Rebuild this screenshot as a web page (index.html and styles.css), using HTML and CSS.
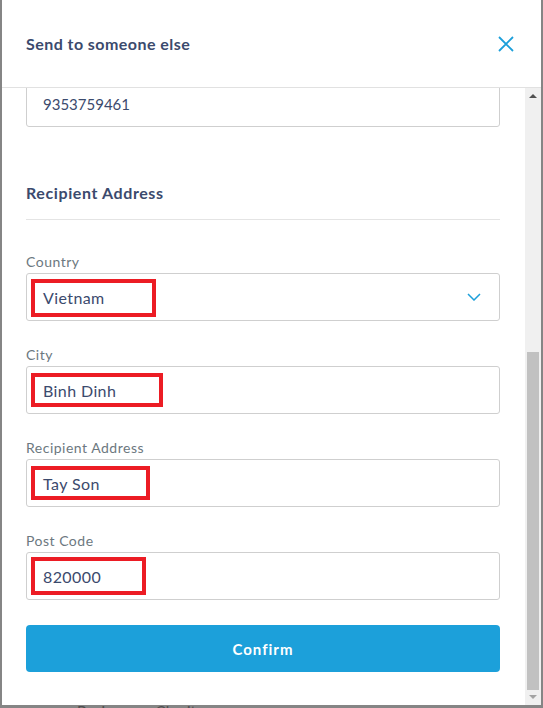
FILE: index.html
```html
<!DOCTYPE html>
<html lang="en">
<head>
<meta charset="utf-8">
<title>Send to someone else</title>
<link rel="stylesheet" href="styles.css">
</head>
<body>
<div class="backdrop">
  <div class="modal">
    <header class="modal-header">
      <h2 class="modal-title">Send to someone else</h2>
      <button class="close" aria-label="Close">
        <svg width="16" height="16" viewBox="0 0 16 16"><path d="M1 1 L15 15 M15 1 L1 15" stroke="#1c9fda" stroke-width="1.8" fill="none"/></svg>
      </button>
    </header>
    <div class="modal-body">
      <div class="scroll-view">
        <div class="content">
          <div class="field-box phone">9353759461</div>

          <h3 class="section-title">Recipient Address</h3>

          <div class="field">
            <label class="field-label">Country</label>
            <div class="field-box select">
              <span class="value">Vietnam</span>
              <svg class="chevron" width="14" height="8" viewBox="0 0 14 8"><path d="M1 1 L7 7 L13 1" stroke="#1c9fda" stroke-width="1.5" fill="none"/></svg>
              <span class="mark mark-country"></span>
            </div>
          </div>

          <div class="field">
            <label class="field-label">City</label>
            <div class="field-box">
              <span class="value">Binh Dinh</span>
              <span class="mark mark-city"></span>
            </div>
          </div>

          <div class="field">
            <label class="field-label">Recipient Address</label>
            <div class="field-box">
              <span class="value">Tay Son</span>
              <span class="mark mark-address"></span>
            </div>
          </div>

          <div class="field">
            <label class="field-label">Post Code</label>
            <div class="field-box">
              <span class="value">820000</span>
              <span class="mark mark-post"></span>
            </div>
          </div>

          <button class="confirm">Confirm</button>
        </div>
      </div>
      <div class="scrollbar">
        <span class="arrow up"></span>
        <div class="track"><div class="thumb"></div></div>
        <span class="arrow down"></span>
      </div>
    </div>
  </div>
  <div class="page-peek"><span class="peek-icon">□</span><span class="peek-text">Business or Charity</span></div>
</div>
</body>
</html>
```

FILE: styles.css
```css
* { box-sizing: border-box; }

html, body {
  margin: 0;
  padding: 0;
  height: 708px;
  overflow: hidden;
}

body {
  background: #858585;
  font-family: "Lato", "Open Sans", sans-serif;
  color: #3b4a6d;
}

.backdrop {
  padding-left: 2px;
  height: 708px;
}

.modal {
  width: 539px;
  height: 705px;
  background: #fff;
  display: flex;
  flex-direction: column;
}

.modal-header {
  height: 88px;
  flex: none;
  border-bottom: 1px solid #e1e1e1;
  display: flex;
  align-items: center;
  justify-content: space-between;
  padding: 0 27px 0 24px;
}

.modal-title {
  margin: 0;
  font-size: 16px;
  font-weight: 700;
  letter-spacing: 0.45px;
  color: #3b4a6d;
  padding-bottom: 1px;
}

.close {
  border: 0;
  background: none;
  padding: 0;
  width: 16px;
  height: 16px;
  display: flex;
  margin-top: 1px;
}

.modal-body {
  flex: 1;
  display: flex;
  min-height: 0;
}

.scroll-view {
  flex: 1;
  overflow: hidden;
}

.content {
  margin-top: -8px;
  padding: 0 25px 0 24px;
}

.field-box {
  position: relative;
  height: 48px;
  border: 1px solid #cfcfcf;
  border-radius: 3px;
  display: flex;
  align-items: center;
  padding: 0 16px;
  font-size: 16px;
  letter-spacing: 0.4px;
  color: #3b4a6d;
}

.field-box.phone {
  height: 47px;
  padding-top: 1px;
  font-size: 15px;
  letter-spacing: 0;
}

.section-title {
  margin: 56px 0 0;
  font-size: 16px;
  line-height: 20px;
  font-weight: 700;
  letter-spacing: 0.6px;
  padding-bottom: 16px;
  border-bottom: 1px solid #e4e4e4;
}

.field {
  display: flex;
  flex-direction: column;
  gap: 2px;
  margin-top: 25px;
}

.section-title + .field { margin-top: 33px; }

.field-label {
  font-size: 14px;
  line-height: 18px;
  color: #6c7880;
  letter-spacing: 0.5px;
}

.select { justify-content: space-between; padding-right: 18px; }

.chevron { display: block; }

.mark {
  position: absolute;
  left: 4px;
  border: 4px solid #ec1c24;
}

.mark-country { top: 5px; width: 125px; height: 38px; }
.mark-city { top: 6px; width: 132px; height: 34px; }
.mark-address { top: 6px; width: 119px; height: 34px; }
.mark-post { top: 4px; width: 115px; height: 38px; }

.confirm {
  display: block;
  width: 100%;
  height: 47px;
  margin-top: 25px;
  border: 0;
  border-radius: 4px;
  background: #1ca0da;
  color: #fff;
  font-family: "Lato", "Open Sans", sans-serif;
  font-size: 15px;
  font-weight: 700;
  letter-spacing: 1px;
}

.scrollbar {
  width: 16px;
  flex: none;
  background: #f0f0f0;
  display: flex;
  flex-direction: column;
  align-items: center;
}

.arrow {
  width: 0;
  height: 0;
  border-left: 4px solid transparent;
  border-right: 4px solid transparent;
  flex: none;
}

.arrow.up {
  margin-top: 6px;
  border-bottom: 4px solid #505050;
}

.arrow.down {
  margin: 5px 0 6px;
  border-top: 4px solid #a3a3a3;
}

.track {
  flex: 1;
  width: 100%;
  display: flex;
  flex-direction: column;
  justify-content: flex-end;
  align-items: center;
}

.thumb {
  width: 12px;
  height: 338px;
  background: #c1c1c1;
}

.page-peek {
  height: 3px;
  overflow: hidden;
  display: flex;
  font-size: 15px;
  line-height: 15px;
  color: #4e4e4e;
  padding-left: 36px;
  gap: 30px;
}

.peek-text, .peek-icon {
  margin-top: -1px;
}
```
